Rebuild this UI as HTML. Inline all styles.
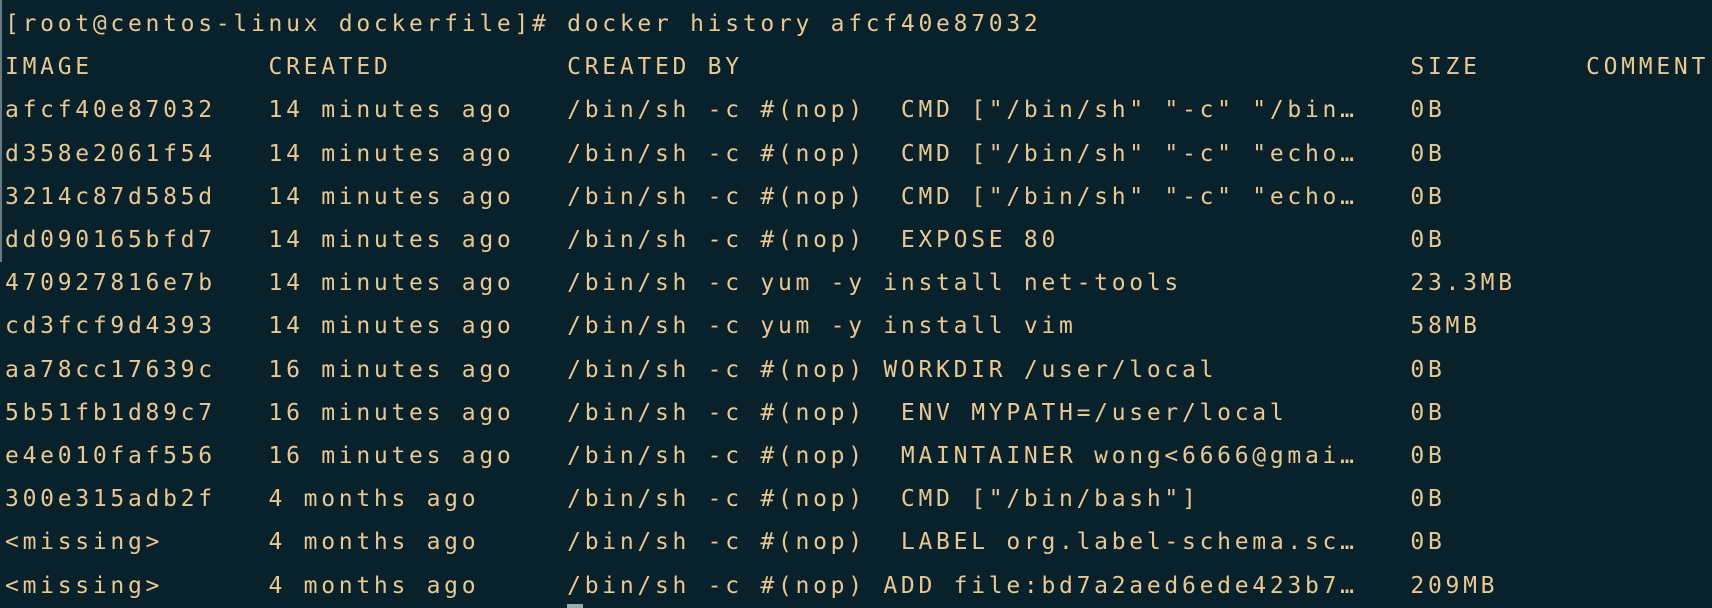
<!DOCTYPE html>
<html><head><meta charset="utf-8"><style>
html,body{margin:0;padding:0;background:#08212b;width:1712px;height:608px;overflow:hidden}
pre{margin:0;padding:3px 0 0 5px;font-family:"DejaVu Sans Mono","Liberation Mono",monospace;font-size:23px;letter-spacing:3.72px;line-height:43.2px;color:#e8c893;white-space:pre}
.bar{position:absolute;left:0;top:0;width:2px;height:262px;background:#6b7a80}
.cur{position:absolute;left:567px;top:604px;width:16px;height:4px;background:#9aa}
</style></head><body><div class="bar"></div><pre>[root@centos-linux dockerfile]# docker history afcf40e87032
IMAGE          CREATED          CREATED BY                                      SIZE      COMMENT
afcf40e87032   14 minutes ago   /bin/sh -c #(nop)  CMD ["/bin/sh" "-c" "/bin…   0B
d358e2061f54   14 minutes ago   /bin/sh -c #(nop)  CMD ["/bin/sh" "-c" "echo…   0B
3214c87d585d   14 minutes ago   /bin/sh -c #(nop)  CMD ["/bin/sh" "-c" "echo…   0B
dd090165bfd7   14 minutes ago   /bin/sh -c #(nop)  EXPOSE 80                    0B
470927816e7b   14 minutes ago   /bin/sh -c yum -y install net-tools             23.3MB
cd3fcf9d4393   14 minutes ago   /bin/sh -c yum -y install vim                   58MB
aa78cc17639c   16 minutes ago   /bin/sh -c #(nop) WORKDIR /user/local           0B
5b51fb1d89c7   16 minutes ago   /bin/sh -c #(nop)  ENV MYPATH=/user/local       0B
e4e010faf556   16 minutes ago   /bin/sh -c #(nop)  MAINTAINER wong&lt;6666@gmai…   0B
300e315adb2f   4 months ago     /bin/sh -c #(nop)  CMD ["/bin/bash"]            0B
&lt;missing&gt;      4 months ago     /bin/sh -c #(nop)  LABEL org.label-schema.sc…   0B
&lt;missing&gt;      4 months ago     /bin/sh -c #(nop) ADD file:bd7a2aed6ede423b7…   209MB</pre><div class="cur"></div></body></html>
